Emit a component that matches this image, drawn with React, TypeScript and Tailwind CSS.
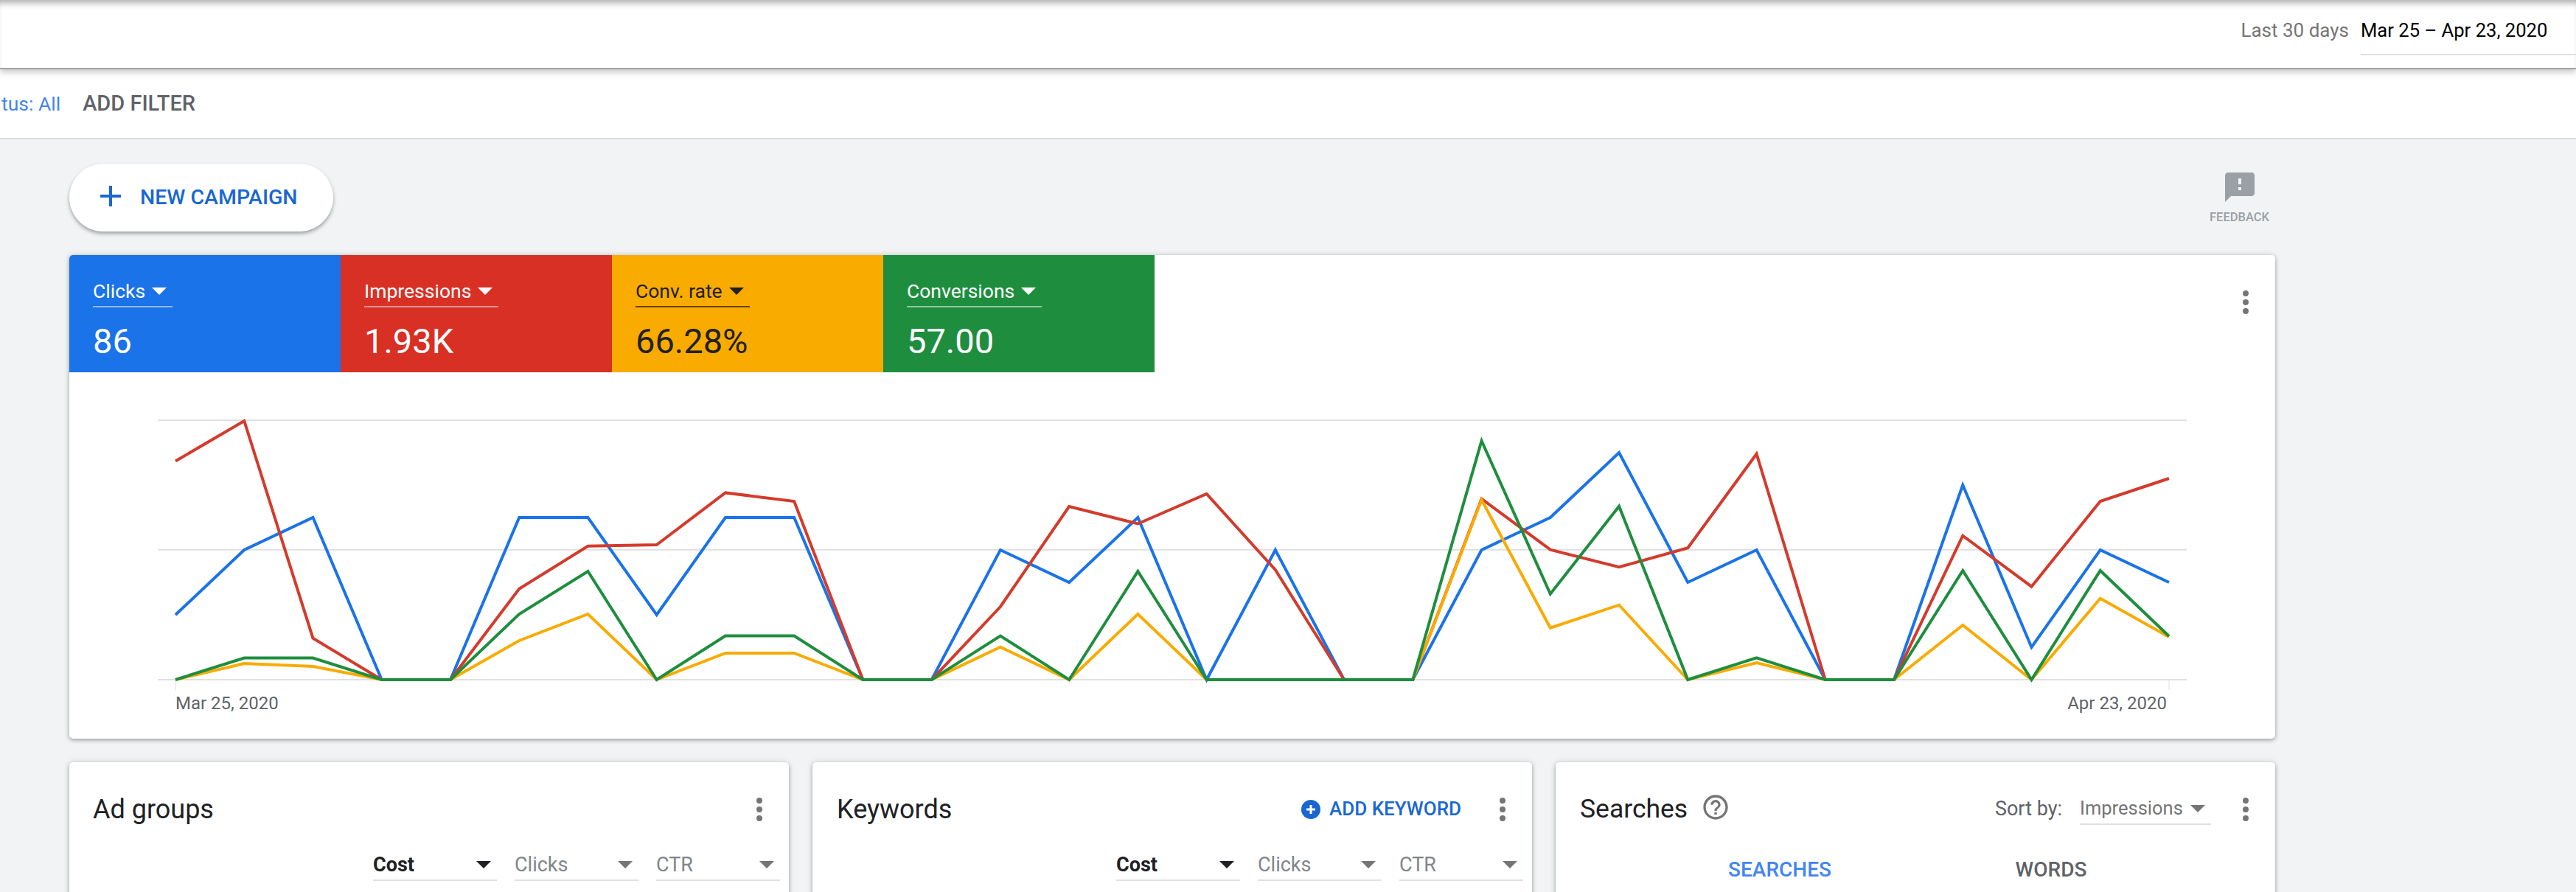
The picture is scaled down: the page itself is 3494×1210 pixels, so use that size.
import React from "react";

const X = (i: number) => 238 + 93.24 * i;
const series: { color: string; ys: number[] }[] = [
  {
    color: "#1a73e8",
    ys: [2, 4, 5, 0, 0, 5, 5, 2, 5, 5, 0, 0, 4, 3, 5, 0, 4, 0, 0, 4, 5, 7, 3, 4, 0, 0, 6, 1, 4, 3].map((v) => 922 - v * 44),
  },
  {
    color: "#d33b2c",
    ys: [625.5, 571, 865.7, 922, 922, 798.8, 740.7, 739, 668.4, 680, 922, 922, 823, 687, 710.5, 670, 773, 922, 922, 676.7, 745.7, 769.3, 743.3, 615.7, 922, 922, 726.7, 795.7, 680, 649],
  },
  {
    color: "#f9ab00",
    ys: [922, 900, 904, 922, 922, 869, 833, 922, 886, 886, 922, 922, 877.8, 922, 833, 922, 922, 922, 922, 678, 851.7, 820.7, 922, 899, 922, 922, 848, 922, 811.7, 864],
  },
  {
    color: "#1e8e3e",
    ys: [922, 892.5, 892.5, 922, 922, 833, 775, 922, 862.6, 862.6, 922, 922, 862.6, 922, 775, 922, 922, 922, 922, 598, 805.7, 686.7, 922, 892.3, 922, 922, 774, 922, 774, 863],
  },
];

function Caret({ className }: { className: string }) {
  return (
    <svg viewBox="0 0 20 10" className={"w-[20px] h-[10px] shrink-0 " + className}>
      <polygon points="0,0 20,0 10,10" fill="currentColor" />
    </svg>
  );
}

function Kebab() {
  return (
    <div className="flex flex-col gap-[4px] shrink-0">
      <div className="w-[8px] h-[8px] rounded-full bg-[#757575]" />
      <div className="w-[8px] h-[8px] rounded-full bg-[#757575]" />
      <div className="w-[8px] h-[8px] rounded-full bg-[#757575]" />
    </div>
  );
}

function Tile({ label, value, bg, dark }: { label: string; value: string; bg: string; dark?: boolean }) {
  return (
    <div className={"w-[368px] h-[159px] pl-[32px] pt-[29px] " + bg + (dark ? " text-[#202124]" : " text-white")}>
      <div className={"inline-flex items-center gap-[9px] pr-[8px] h-[42px] border-b-2 text-[26.5px] leading-[40px] " + (dark ? "border-black/60" : "border-white/50")}>
        <span>{label}</span>
        <Caret className="" />
      </div>
      <div className="mt-[18px] text-[47px] leading-[56px]">{value}</div>
    </div>
  );
}

function Drop({ label, active }: { label: string; active?: boolean }) {
  return (
    <div className={"w-[168px] h-[42px] flex items-center justify-between pr-[8px] border-b-2 border-[#e0e0e0] text-[27px] " + (active ? "font-bold text-[#202124]" : "text-[#80868b]")}>
      <span>{label}</span>
      <Caret className={active ? "text-[#202124]" : "text-[#757575]"} />
    </div>
  );
}

function DropRow() {
  return (
    <div className="flex justify-end gap-[24px] pr-[12px]">
      <Drop label="Cost" active />
      <Drop label="Clicks" />
      <Drop label="CTR" />
    </div>
  );
}

const card = "bg-white rounded-[5px] shadow-[0_2px_5px_rgba(60,64,67,0.4),0_0_8px_rgba(60,64,67,0.15)]";

export default function App() {
  return (
    <div className="h-[1210px] w-full overflow-hidden bg-[#f1f3f4] font-[Roboto,sans-serif] text-[#202124]">
      <header className="relative z-20 h-[94px] bg-white border-b-2 border-[#a3a3a3] shadow-[0_4px_8px_rgba(0,0,0,0.22),inset_0_9px_8px_-5px_rgba(0,0,0,0.32)] flex items-start justify-end">
        <span className="mt-[24px] text-[26px] leading-[34px] text-[#757575]">Last 30 days</span>
        <div className="ml-[16px] mt-[24px] w-[292px] h-[51px] border-b-2 border-[#e0e0e0] text-[25.6px] leading-[34px] text-black whitespace-nowrap">
          Mar 25 – Apr 23, 2020
        </div>
      </header>

      <div className="relative z-10 h-[95px] bg-white border-b-2 border-[#dadce0] flex items-center pl-[2px]">
        <span className="text-[26.5px] text-[#4285f4]">tus: All</span>
        <span className="ml-[30px] text-[29px] font-medium text-[#5f6368]">ADD FILTER</span>
      </div>

      <main className="w-[2992px] ml-[94px]">
        <div className="pt-[33px] pb-[32px] flex justify-between items-start">
          <button className="h-[92px] w-[358px] rounded-[46px] bg-white shadow-[0_3px_5px_rgba(60,64,67,0.45)] flex items-center pl-[32px] gap-[16px]">
            <svg viewBox="0 0 48 48" className="w-[48px] h-[48px] -mt-[4px] shrink-0">
              <path d="M24 10V38M10 24H38" stroke="#1967d2" strokeWidth="4" fill="none" />
            </svg>
            <span className="text-[28.5px] font-medium text-[#1967d2] whitespace-nowrap">NEW CAMPAIGN</span>
          </button>
          <div className="mt-[8px] mr-[8px] w-[81px] flex flex-col items-center">
            <svg viewBox="0 0 24 24" className="w-[48px] h-[48px]" fill="#9aa0a6">
              <path d="M20 2H4c-1.1 0-1.99.9-1.99 2L2 22l4-4h14c1.1 0 2-.9 2-2V4c0-1.1-.9-2-2-2zm-7 12h-2v-2h2v2zm0-4h-2V6h2v4z" />
            </svg>
            <span className="mt-[7px] text-[16.5px] leading-[20px] font-medium text-[#9aa0a6] whitespace-nowrap">FEEDBACK</span>
          </div>
        </div>

        <section className={card + " h-[656px] overflow-hidden"}>
          <div className="flex items-start">
            <Tile label="Clicks" value="86" bg="bg-[#1a73e8]" />
            <Tile label="Impressions" value="1.93K" bg="bg-[#d93025]" />
            <Tile label="Conv. rate" value="66.28%" bg="bg-[#f9ab00]" dark />
            <Tile label="Conversions" value="57.00" bg="bg-[#1e8e3e]" />
            <div className="flex-1 flex justify-end pr-[36px] pt-[48px]">
              <Kebab />
            </div>
          </div>
          <svg viewBox="94 505 2992 431" className="block w-[2992px] h-[431px]">
            {[570, 745.7, 922].map((y) => (
              <line key={y} x1="214" x2="2966" y1={y} y2={y} stroke="#e0e0e0" strokeWidth="2" />
            ))}
            <line x1="238" x2="238" y1="922" y2="936" stroke="#e0e0e0" strokeWidth="1" />
            <line x1="2942" x2="2942" y1="922" y2="936" stroke="#e0e0e0" strokeWidth="1" />
            {series.map((s) => (
              <polyline
                key={s.color}
                points={s.ys.map((y, i) => `${X(i)},${y}`).join(" ")}
                fill="none"
                stroke={s.color}
                strokeWidth="4"
                strokeLinejoin="miter"
              />
            ))}
          </svg>
          <div className="flex justify-between pl-[144px] pr-[147px] text-[24px] leading-[36px] text-[#5f6368]">
            <span>Mar 25, 2020</span>
            <span>Apr 23, 2020</span>
          </div>
        </section>

        <div className="mt-[32px] grid grid-cols-3 gap-[32px]">
          <section className={card + " h-[400px]"}>
            <div className="h-[119px] pt-[8px] pl-[32px] pr-[36px] flex items-center justify-between">
              <h2 className="text-[36px] font-normal">Ad groups</h2>
              <Kebab />
            </div>
            <DropRow />
          </section>

          <section className={card + " h-[400px]"}>
            <div className="h-[119px] pt-[8px] pl-[33px] pr-[36px] flex items-center">
              <h2 className="text-[36px] font-normal">Keywords</h2>
              <div className="ml-auto flex items-center gap-[12px] mr-[52px]">
                <svg viewBox="0 0 26 26" className="w-[26px] h-[26px]">
                  <circle cx="13" cy="13" r="13" fill="#1967d2" />
                  <path d="M13 7V19M7 13H19" stroke="#fff" strokeWidth="3" />
                </svg>
                <span className="text-[26px] font-medium text-[#1967d2] whitespace-nowrap">ADD KEYWORD</span>
              </div>
              <Kebab />
            </div>
            <DropRow />
          </section>

          <section className={card + " h-[400px]"}>
            <div className="h-[119px] pt-[8px] pl-[33px] pr-[36px] flex items-center">
              <h2 className="text-[35.5px] font-normal">Searches</h2>
              <svg viewBox="0 0 24 24" className="w-[40px] h-[40px] ml-[18px] -mt-[6px]" fill="#757575">
                <path d="M11 18h2v-2h-2v2zm1-16C6.48 2 2 6.48 2 12s4.48 10 10 10 10-4.48 10-10S17.52 2 12 2zm0 18c-4.41 0-8-3.59-8-8s3.59-8 8-8 8 3.59 8 8-3.59 8-8 8zm0-14c-2.21 0-4 1.79-4 4h2c0-1.1.9-2 2-2s2 .9 2 2c0 2-3 1.75-3 5h2c0-2.25 3-2.5 3-5 0-2.21-1.79-4-4-4z" />
              </svg>
              <span className="ml-auto text-[27px] text-[#5f6368] whitespace-nowrap">Sort by:</span>
              <div className="ml-[24px] mr-[43px] w-[178px] h-[42px] flex items-center justify-between pr-[8px] border-b-2 border-[#e0e0e0] text-[25.5px] text-[#757575]">
                <span>Impressions</span>
                <Caret className="text-[#757575]" />
              </div>
              <Kebab />
            </div>
            <div className="mt-[7px] mx-auto w-[736px] grid grid-cols-2 text-center text-[28px] font-medium leading-[40px]">
              <span className="text-[#4285f4]">SEARCHES</span>
              <span className="text-[#5f6368]">WORDS</span>
            </div>
          </section>
        </div>
      </main>
    </div>
  );
}
